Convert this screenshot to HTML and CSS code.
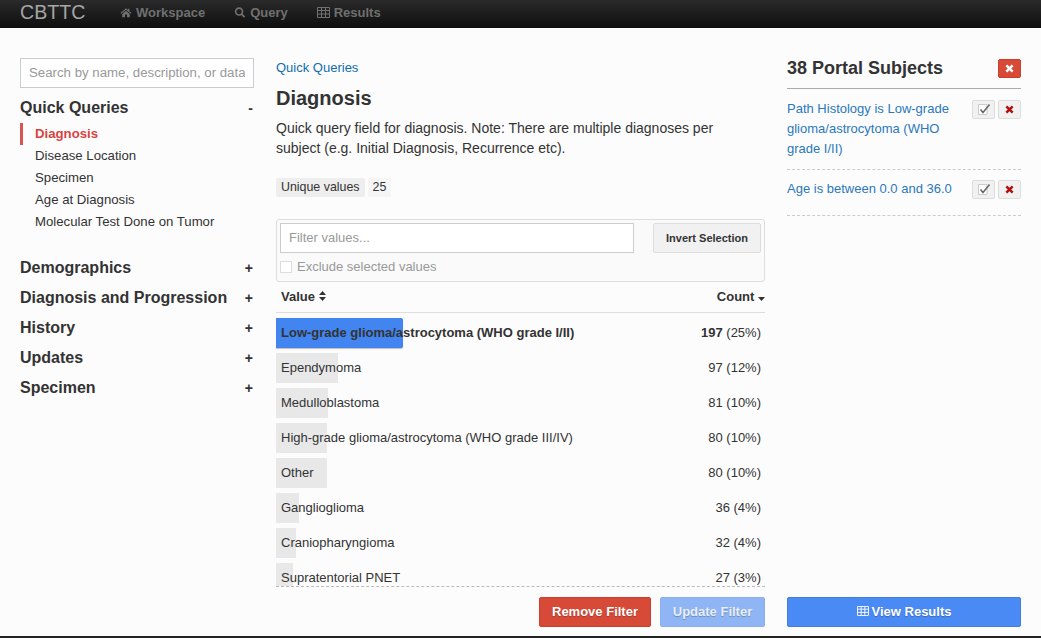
FILE: index.html

```html
<!DOCTYPE html>
<html lang="en">
<head>
  <meta charset="UTF-8" />
  <title>CBTTC</title>
  <link rel="stylesheet" href="styles.css">
</head>
<body>
  <div class="navbar">
    <span class="brand">CBTTC</span>
    <a class="nav-link">
      <svg class="nav-icon" viewBox="0 0 14 12"><path d="M7 1 L0.5 6.6 L1.4 7.6 L7 2.8 L12.6 7.6 L13.5 6.6 L11 4.4 V1.5 H9.4 V3 Z M2.6 7.8 V11.5 H5.8 V8.4 H8.2 V11.5 H11.4 V7.8 L7 4 Z" fill="currentColor"/></svg>
      Workspace
    </a>
    <a class="nav-link">
      <svg class="nav-icon" viewBox="0 0 12 12"><circle cx="5" cy="5" r="3.8" fill="none" stroke="currentColor" stroke-width="1.7"/><path d="M7.8 7.8 L11 11" stroke="currentColor" stroke-width="2"/></svg>
      Query
    </a>
    <a class="nav-link">
      <svg class="nav-icon wide" viewBox="0 0 13 11"><path d="M.5 .5 H12.5 V10.5 H.5 Z M.5 3.5 H12.5 M.5 7 H12.5 M4.5 .5 V10.5 M8.5 .5 V10.5" fill="none" stroke="currentColor"/></svg>
      Results
    </a>
  </div>

  <div class="page">
    <div class="sidebar">
      <input class="search" type="text" placeholder="Search by name, description, or data" />
      <div class="group-title first"><span>Quick Queries</span><span class="toggle">-</span></div>
      <ul class="query-list">
        <li class="active">Diagnosis</li>
        <li>Disease Location</li>
        <li>Specimen</li>
        <li>Age at Diagnosis</li>
        <li>Molecular Test Done on Tumor</li>
      </ul>
      <div class="group-title"><span>Demographics</span><span class="toggle">+</span></div>
      <div class="group-title"><span>Diagnosis and Progression</span><span class="toggle">+</span></div>
      <div class="group-title"><span>History</span><span class="toggle">+</span></div>
      <div class="group-title"><span>Updates</span><span class="toggle">+</span></div>
      <div class="group-title"><span>Specimen</span><span class="toggle">+</span></div>
    </div>

    <div class="content">
      <a class="crumb">Quick Queries</a>
      <h2>Diagnosis</h2>
      <p class="desc">Quick query field for diagnosis. Note: There are multiple diagnoses per subject (e.g. Initial Diagnosis, Recurrence etc).</p>
      <div class="stats"><span class="stat-label">Unique values</span><span class="stat-value">25</span></div>

      <div class="filter-box">
        <div class="filter-top">
          <input class="filter-input" type="text" placeholder="Filter values..." />
          <button class="invert">Invert Selection</button>
        </div>
        <label class="exclude"><span class="checkbox"></span>Exclude selected values</label>
      </div>

      <div class="table-head">
        <span>Value
          <svg class="sort" viewBox="0 0 7 10"><path d="M3.5 0 L7 4 H0 Z M3.5 10 L7 6 H0 Z" fill="currentColor"/></svg>
        </span>
        <span>Count
          <svg class="sort-down" viewBox="0 0 7 4"><path d="M0 0 H7 L3.5 4 Z" fill="currentColor"/></svg>
        </span>
      </div>

      <div class="rows">
        <div class="row selected"><div class="bar" style="width:127px"></div><span class="name">Low-grade glioma/astrocytoma (WHO grade I/II)</span><span class="count"><b>197</b> (25%)</span></div>
        <div class="row"><div class="bar" style="width:62px"></div><span class="name">Ependymoma</span><span class="count">97 (12%)</span></div>
        <div class="row"><div class="bar" style="width:52px"></div><span class="name">Medulloblastoma</span><span class="count">81 (10%)</span></div>
        <div class="row"><div class="bar" style="width:51px"></div><span class="name">High-grade glioma/astrocytoma (WHO grade III/IV)</span><span class="count">80 (10%)</span></div>
        <div class="row"><div class="bar" style="width:51px"></div><span class="name">Other</span><span class="count">80 (10%)</span></div>
        <div class="row"><div class="bar" style="width:23px"></div><span class="name">Ganglioglioma</span><span class="count">36 (4%)</span></div>
        <div class="row"><div class="bar" style="width:20px"></div><span class="name">Craniopharyngioma</span><span class="count">32 (4%)</span></div>
        <div class="row"><div class="bar" style="width:17px"></div><span class="name">Supratentorial PNET</span><span class="count">27 (3%)</span></div>
      </div>

      <div class="actions">
        <button class="btn btn-red">Remove Filter</button>
        <button class="btn btn-blue-off">Update Filter</button>
      </div>
    </div>

    <div class="cohort">
      <div class="cohort-head">
        <h3>38 Portal Subjects</h3>
        <button class="clear-all"><svg class="x-icon" viewBox="0 0 8 8"><path d="M1.2 1.2 L6.8 6.8 M6.8 1.2 L1.2 6.8" stroke="currentColor" stroke-width="2.2"/></svg></button>
      </div>
      <div class="criterion">
        <a>Path Histology is Low-grade glioma/astrocytoma (WHO grade I/II)</a>
        <div class="crit-btns">
          <button class="mini"><svg class="check-icon" viewBox="0 0 14 13"><path d="M1.5 1.5 H10 V11.5 H1.5 Z" fill="#fff" stroke="#ccc"/><path d="M3.5 6.5 L6 9.5 L12.5 1.5" fill="none" stroke="#666" stroke-width="1.6"/></svg></button>
          <button class="mini"><svg class="x-icon dark" viewBox="0 0 8 8"><path d="M1.2 1.2 L6.8 6.8 M6.8 1.2 L1.2 6.8" stroke="currentColor" stroke-width="2.2"/></svg></button>
        </div>
      </div>
      <div class="criterion">
        <a>Age is between 0.0 and 36.0</a>
        <div class="crit-btns">
          <button class="mini"><svg class="check-icon" viewBox="0 0 14 13"><path d="M1.5 1.5 H10 V11.5 H1.5 Z" fill="#fff" stroke="#ccc"/><path d="M3.5 6.5 L6 9.5 L12.5 1.5" fill="none" stroke="#666" stroke-width="1.6"/></svg></button>
          <button class="mini"><svg class="x-icon dark" viewBox="0 0 8 8"><path d="M1.2 1.2 L6.8 6.8 M6.8 1.2 L1.2 6.8" stroke="currentColor" stroke-width="2.2"/></svg></button>
        </div>
      </div>
      <button class="btn btn-blue view-results">
        <svg class="table-icon" viewBox="0 0 13 11"><path d="M.5 .5 H12.5 V10.5 H.5 Z M.5 3.5 H12.5 M.5 7 H12.5 M4.5 .5 V10.5 M8.5 .5 V10.5" fill="none" stroke="currentColor"/></svg>
        View Results
      </button>
    </div>
  </div>
</body>
</html>
```

FILE: styles.css

```css
* { box-sizing: border-box; }
html, body { margin: 0; height: 100%; overflow: hidden; }
body {
  display: flex; flex-direction: column;
  font-family: "Liberation Sans", Arial, sans-serif;
  font-size: 13px; color: #333; background: #fcfcfc;
  border-bottom: 2px solid #222;
}
button { font-family: inherit; cursor: pointer; }

.navbar {
  height: 28px; flex: none; display: flex; align-items: center;
  padding: 0 0 4px 20px; background: linear-gradient(#2a2a2a, #0e0e0e);
}
.brand { font-size: 19.6px; color: #a6a6a6; width: 100px; }
.nav-link { display: flex; align-items: center; gap: 4px; margin-right: 29px; font-size: 13px; font-weight: bold; color: #707070; }
.nav-icon { width: 12px; height: 11px; }
.nav-icon.wide { width: 13px; }

.page { flex: 1; display: flex; gap: 22px; padding: 30px 20px 9px; min-height: 0; }

/* left column */
.sidebar { width: 234px; flex: none; }
.search {
  width: 100%; height: 30px; padding: 0 8px 2px; font: 13.25px "Liberation Sans", Arial, sans-serif;
  border: 1px solid #ccc; background: #fff;
}
.search::placeholder, .filter-input::placeholder { color: #999; }
.group-title {
  height: 30px; display: flex; justify-content: space-between; align-items: center;
  font-size: 16px; font-weight: bold; color: #333;
}
.group-title.first { margin-top: 5px; }
.toggle { font-size: 14px; width: 9px; margin-right: 1px; text-align: right; }
.query-list { list-style: none; margin: 0 0 20px; padding: 0; font-size: 13.2px; }
.query-list li { height: 22px; line-height: 22px; padding-left: 12px; border-left: 3px solid transparent; }
.query-list li.active { border-left-color: #d9534f; color: #d9433f; font-weight: bold; }

/* middle column */
.content { width: 489px; flex: none; display: flex; flex-direction: column; min-height: 0; }
.crumb { color: #0f6cb0; line-height: 18px; margin: 1px 0 7px; }
h2 { margin: 0 0 6px; font-size: 20px; line-height: 28px; color: #333; }
.desc { margin: 0 20px 20px 0; font-size: 14px; line-height: 20px; }
.stats { display: flex; gap: 3px; height: 19px; line-height: 19px; font-size: 12.4px; margin-bottom: 22px; }
.stat-label { padding: 0 5px; background: #eee; border-radius: 2px; }
.stat-value { padding: 0 5px; background: #f5f5f5; }
.filter-box { height: 63px; padding: 3px; border: 1px solid #ddd; border-radius: 3px; background: #fafafa; flex: none; }
.filter-top { display: flex; justify-content: space-between; }
.filter-input { width: 354px; height: 30px; padding: 0 8px 2px; font: 13px "Liberation Sans", Arial, sans-serif; border: 1px solid #ccc; background: #fff; }
.invert { width: 108px; height: 30px; font-size: 11px; font-weight: bold; color: #333; border: 1px solid #ddd; border-radius: 2px; background: #f1f1f1; }
.exclude { display: flex; align-items: center; gap: 5px; margin-top: 7px; color: #999; line-height: 14px; }
.checkbox { width: 12px; height: 12px; border: 1px solid #ddd; background: #fff; }
.table-head {
  flex: none; display: flex; justify-content: space-between; height: 31px; padding: 7px 0 0 5px;
  border-bottom: 1px solid #ddd; font-size: 13px; font-weight: bold; line-height: 15px;
}
.sort { width: 7px; height: 10px; }
.sort-down { width: 7px; height: 4px; }
.rows { flex: 1; min-height: 0; overflow: hidden; padding-top: 5px; border-bottom: 1px dashed #bbb; }
.row {
  position: relative; height: 30px; margin-bottom: 5px; display: flex; justify-content: space-between;
  align-items: center; padding: 0 4px 2px 5px; font-size: 13px;
}
.bar { position: absolute; left: 0; top: 0; bottom: 0; background: #e8e8e8; }
.name, .count { position: relative; }
.row.selected .name { font-weight: bold; }
.row.selected .bar { background: #4285f0; border-radius: 0 2px 2px 0; box-shadow: 0 1px 1px rgba(0,0,0,.25); }
.actions { flex: none; display: flex; justify-content: flex-end; gap: 9px; margin-top: 10px; }

.btn { height: 30px; padding: 0 0 2px; font-size: 13px; font-weight: bold; color: #fff; border: 1px solid transparent; border-radius: 2px; text-shadow: 0 1px 1px rgba(0,0,0,.25); }
.btn-red { width: 112px; background: #d84a38; border-color: #c9402f; }
.btn-blue-off { width: 105px; background: #8fb5f5; border-color: #8aaef0; color: #e8effb; }
.btn-blue { background: #4a8af4; border-color: #3f7de0; }

/* right column */
.cohort { width: 234px; flex: none; display: flex; flex-direction: column; }
.cohort-head {
  display: flex; justify-content: space-between; align-items: flex-start; height: 31px;
  border-bottom: 1px solid #aaa;
}
h3 { margin: 0; font-size: 18px; line-height: 20px; color: #333; }
.clear-all {
  width: 23px; height: 19px; margin-top: 1px; padding: 0; display: flex; align-items: center; justify-content: center;
  background: #d84a38; border: 1px solid #c9402f; border-radius: 2px; color: #fff;
}
.x-icon { width: 9px; height: 9px; }
.x-icon.dark { color: #b30f0f; }
.criterion { display: flex; justify-content: space-between; align-items: flex-start; padding: 10px 0; border-bottom: 1px dashed #ccc; }
.criterion + .criterion { padding: 9px 0 16px; }
.criterion a { width: 175px; color: #2a78bd; line-height: 20px; }
.crit-btns { display: flex; gap: 3px; margin-top: 1px; }
.mini {
  width: 23px; height: 19px; padding: 0; display: flex; align-items: center; justify-content: center;
  background: #f1f1f1; border: 1px solid #ddd; border-radius: 2px;
}
.check-icon { width: 14px; height: 13px; }
.view-results { margin-top: auto; width: 100%; flex: none; display: flex; align-items: center; justify-content: center; gap: 3px; }
.table-icon { width: 12px; height: 10px; }
```
